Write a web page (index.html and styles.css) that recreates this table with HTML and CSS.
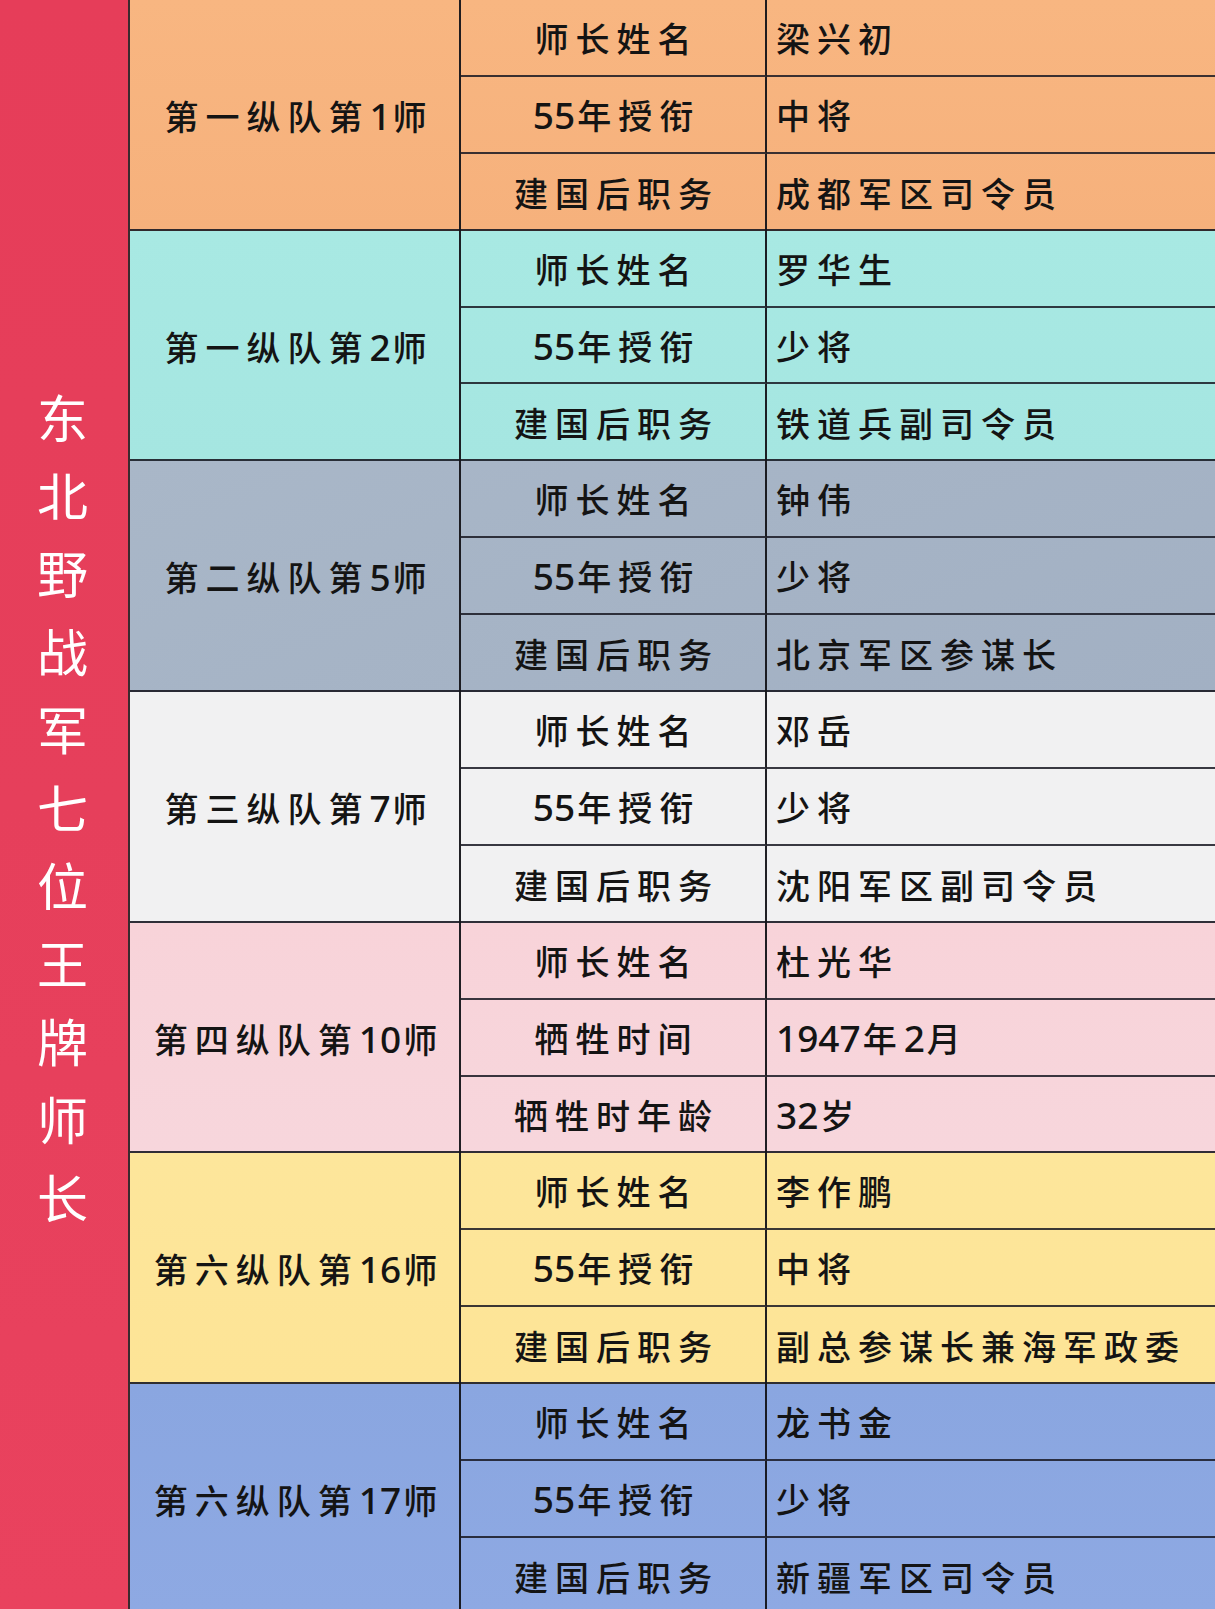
FILE: index.html
```html
<!DOCTYPE html>
<html lang="zh-CN">
<head>
<meta charset="utf-8">
<title>东北野战军七位王牌师长</title>
<link rel="stylesheet" href="styles.css">
</head>
<body>
<div class="page">
  <div class="title"><div class="title-text">东北野战军七位王牌师长</div></div>
  <div class="groups">
    <div class="group g-orange">
      <div class="name">第一纵队第<span class="n">1</span>师</div>
      <div class="label">师长姓名</div><div class="value">梁兴初</div>
      <div class="label"><span class="n">55</span>年授衔</div><div class="value">中将</div>
      <div class="label last">建国后职务</div><div class="value last">成都军区司令员</div>
    </div>
    <div class="group g-cyan">
      <div class="name">第一纵队第<span class="n">2</span>师</div>
      <div class="label">师长姓名</div><div class="value">罗华生</div>
      <div class="label"><span class="n">55</span>年授衔</div><div class="value">少将</div>
      <div class="label last">建国后职务</div><div class="value last">铁道兵副司令员</div>
    </div>
    <div class="group g-slate">
      <div class="name">第二纵队第<span class="n">5</span>师</div>
      <div class="label">师长姓名</div><div class="value">钟伟</div>
      <div class="label"><span class="n">55</span>年授衔</div><div class="value">少将</div>
      <div class="label last">建国后职务</div><div class="value last">北京军区参谋长</div>
    </div>
    <div class="group g-white">
      <div class="name">第三纵队第<span class="n">7</span>师</div>
      <div class="label">师长姓名</div><div class="value">邓岳</div>
      <div class="label"><span class="n">55</span>年授衔</div><div class="value">少将</div>
      <div class="label last">建国后职务</div><div class="value last">沈阳军区副司令员</div>
    </div>
    <div class="group g-pink">
      <div class="name">第四纵队第<span class="n">10</span>师</div>
      <div class="label">师长姓名</div><div class="value">杜光华</div>
      <div class="label">牺牲时间</div><div class="value"><span class="n">1947</span>年<span class="n">2</span>月</div>
      <div class="label last">牺牲时年龄</div><div class="value last"><span class="n">32</span>岁</div>
    </div>
    <div class="group g-yellow">
      <div class="name">第六纵队第<span class="n">16</span>师</div>
      <div class="label">师长姓名</div><div class="value">李作鹏</div>
      <div class="label"><span class="n">55</span>年授衔</div><div class="value">中将</div>
      <div class="label last">建国后职务</div><div class="value last">副总参谋长兼海军政委</div>
    </div>
    <div class="group g-blue">
      <div class="name">第六纵队第<span class="n">17</span>师</div>
      <div class="label">师长姓名</div><div class="value">龙书金</div>
      <div class="label"><span class="n">55</span>年授衔</div><div class="value">少将</div>
      <div class="label last">建国后职务</div><div class="value last">新疆军区司令员</div>
    </div>
  </div>
</div>
</body>
</html>
```
FILE: styles.css
```css
* { box-sizing: border-box; }
html, body {
  margin: 0;
  padding: 0;
  width: 1215px;
  height: 1609px;
  overflow: hidden;
  background: #ffffff;
}
body {
  font-family: "Noto Sans CJK SC", "Noto Sans", sans-serif;
  color: #141414;
}
.page {
  display: flex;
  width: 1215px;
  height: 1609px;
  overflow: hidden;
}
.title {
  width: 130px;
  flex: 0 0 130px;
  height: 1609px;
  background: linear-gradient(180deg, #e63d59 0%, #e63f5b 50%, #e9425e 100%);
  border-right: 2px solid #3a2a2e;
  display: flex;
  align-items: center;
  justify-content: center;
}
.title-text {
  writing-mode: vertical-rl;
  text-orientation: upright;
  color: #ffffff;
  font-size: 51px;
  font-weight: 400;
  letter-spacing: 27px;
  line-height: 1;
  padding-top: 27px;
  margin-top: 8px;
  margin-right: 4px;
}
.groups {
  flex: 1;
  display: flex;
  flex-direction: column;
}
.group {
  flex: 0 0 auto;
  display: grid;
  grid-template-columns: 331px 306px 1fr;
  grid-template-rows: 76.9px 76.9px 76.9px;
  border-bottom: 2px solid rgba(25, 25, 35, 0.9);
  height: 230.7px;
}
.group .last { border-bottom: none; }
.name {
  grid-row: 1 / span 3;
  grid-column: 1;
  border-right: 2px solid rgba(20, 20, 25, 0.95);
  display: flex;
  align-items: center;
  justify-content: center;
  font-size: 34px;
  font-weight: 500;
  letter-spacing: 7px;
  padding-left: 9px;
}
.label {
  grid-column: 2;
  border-right: 2px solid rgba(20, 20, 25, 0.95);
  border-bottom: 2px solid rgba(25, 25, 35, 0.85);
  display: flex;
  align-items: center;
  justify-content: center;
  font-size: 34px;
  font-weight: 500;
  letter-spacing: 7px;
  padding-left: 7px;
}
.value {
  grid-column: 3;
  border-bottom: 2px solid rgba(25, 25, 35, 0.85);
  display: flex;
  align-items: center;
  justify-content: flex-start;
  padding-left: 9px;
  font-size: 34px;
  font-weight: 500;
  letter-spacing: 7px;
}
.n {
  font-family: "Noto Sans", "Liberation Sans", sans-serif;
  font-size: 37px;
  font-weight: 500;
  letter-spacing: 0;
  margin-right: 2px;
}
.g-orange { background: linear-gradient(180deg, #f8b681 0%, #f6b17c 100%); }
.g-cyan { background: linear-gradient(180deg, #a8e9e3 0%, #a5e6e1 100%); }
.g-slate { background: linear-gradient(160deg, #a9b7c8 0%, #a2b0c3 100%); }
.g-white { background: #f1f1f2; }
.g-pink { background: linear-gradient(180deg, #f8d3d9 0%, #f7d6dc 100%); }
.g-yellow { background: linear-gradient(180deg, #fde69b 0%, #fde496 100%); }
.g-blue { background: linear-gradient(180deg, #8aa6e0 0%, #8ea9e3 100%); }
```
